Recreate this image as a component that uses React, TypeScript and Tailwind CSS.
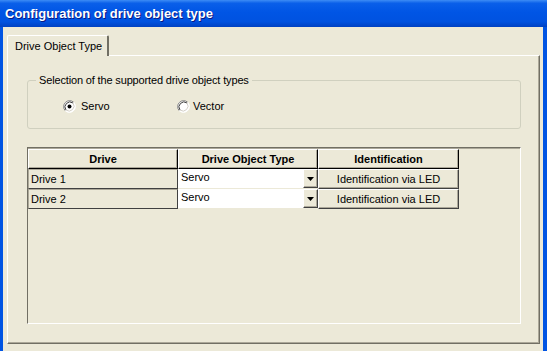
import React from "react";

function Radio({ checked }: { checked: boolean }) {
  return (
    <svg width="13" height="13" viewBox="0 0 13 13" className="shrink-0">
      <circle cx="6.5" cy="6.5" r="6" fill="#ffffff" />
      <path d="M2.26 10.74 A6 6 0 0 1 10.74 2.26" fill="none" stroke="#808080" strokeWidth="1" />
      <path d="M3 10 A5 5 0 0 1 10 3" fill="none" stroke="#404040" strokeWidth="1" />
      <path d="M10.74 2.26 A6 6 0 0 1 2.26 10.74" fill="none" stroke="#ffffff" strokeWidth="1" />
      <path d="M10 3 A5 5 0 0 1 3 10" fill="none" stroke="#d4d0c8" strokeWidth="1" />
      {checked && <circle cx="6.5" cy="6.5" r="2" fill="#000000" />}
    </svg>
  );
}

function HeaderCell({ children }: { children: React.ReactNode }) {
  return (
    <div className="h-[20px] flex items-center justify-center bg-[#ECE9D8] border-t border-l border-t-white border-l-white border-r border-b border-r-[#000000] border-b-[#000000] shadow-[inset_-1px_-1px_0_#ACA899] font-bold text-[11px] text-black leading-none">
      {children}
    </div>
  );
}

function DriveCell({ children }: { children: React.ReactNode }) {
  return (
    <div className="h-[20px] flex items-center pl-[2px] bg-[#ECE9D8] border border-t-[#ACA899] border-l-[#ACA899] border-r-[#404040] border-b-[#404040] text-[11px] text-black leading-none">
      {children}
    </div>
  );
}

function ComboCell() {
  return (
    <div className="h-[20px] flex bg-white border-b border-b-[#ECE9D8]">
      <div className="flex-1 pl-[3px] pt-[2px] text-[11px] text-black leading-[13px]">Servo</div>
      <div className="w-[15px] h-[19px] flex items-center justify-center bg-[#ECE9D8] border-t border-l border-t-white border-l-white border-r border-b border-r-[#404040] border-b-[#404040] shadow-[inset_-1px_-1px_0_#ACA899]">
        <svg width="7" height="4" viewBox="0 0 7 4">
          <path d="M0 0 H7 L3.5 4 Z" fill="#000" />
        </svg>
      </div>
    </div>
  );
}

function ButtonCell() {
  return (
    <div className="h-[20px] flex items-center justify-center bg-[#ECE9D8] border-t border-l border-t-white border-l-white border-r border-b border-r-[#404040] border-b-[#404040] shadow-[inset_-1px_-1px_0_#ACA899] text-[11px] text-black leading-none">
      Identification via LED
    </div>
  );
}

export default function App() {
  return (
    <div className="w-[547px] h-[351px] flex flex-col overflow-hidden bg-[#0054E3] font-['Liberation_Sans',Arial,sans-serif]">
      <div className="h-[27px] shrink-0 flex items-center pl-[5px] bg-[linear-gradient(to_bottom,#3d8cf5_0%,#0a5fe9_12%,#0055e5_45%,#0052e0_80%,#0041c2_100%)]">
        <span className="text-white font-bold text-[13px] [text-shadow:1px_1px_#0a1883]">
          Configuration of drive object type
        </span>
      </div>
      <div className="flex-1 flex flex-col ml-[3px] mr-[4px] bg-[#ECE9D8] pt-[8px] pl-[4px] pr-[3px] pb-[7px]">
        <div className="flex">
          <div className="relative z-10 -mb-px w-[102px] h-[21px] flex items-center pl-[7px] bg-[#ECE9D8] border-t border-l border-t-white border-l-white border-r-2 border-r-[#716F64] rounded-t-[2px] text-[11px] text-black leading-none">
            Drive Object Type
          </div>
        </div>
        <div className="flex-1 flex flex-col border-t border-l border-t-white border-l-white border-r border-b border-r-[#716F64] border-b-[#716F64] shadow-[inset_-1px_-1px_0_#ACA899] pt-[18px] pl-[19px] pr-[18px] pb-[19px]">
          <fieldset className="h-[55px] border border-[#D0D0BF] rounded-[3px] px-0">
            <legend className="ml-[8px] px-[3px] text-[11px] tracking-[-0.15px] leading-[13px] text-black">
              Selection of the supported drive object types
            </legend>
            <div className="flex items-center pl-[35px] mt-[13px]">
              <div className="w-[114px] flex items-center gap-[5px] text-[11px] text-black leading-[13px]">
                <Radio checked />
                <span>Servo</span>
              </div>
              <div className="flex items-center gap-[3px] text-[11px] text-black leading-[13px]">
                <Radio checked={false} />
                <span>Vector</span>
              </div>
            </div>
          </fieldset>
          <div className="mt-[18px] flex-1 border-t border-l border-t-[#716F64] border-l-[#716F64] border-r border-b border-r-white border-b-white shadow-[inset_0_1px_0_#ACA899] pt-[1px]">
            <div className="grid grid-cols-[150px_140px_141px]">
              <HeaderCell>Drive</HeaderCell>
              <HeaderCell>Drive Object Type</HeaderCell>
              <HeaderCell>Identification</HeaderCell>
              <DriveCell>Drive 1</DriveCell>
              <ComboCell />
              <ButtonCell />
              <DriveCell>Drive 2</DriveCell>
              <ComboCell />
              <ButtonCell />
            </div>
          </div>
        </div>
      </div>
    </div>
  );
}
